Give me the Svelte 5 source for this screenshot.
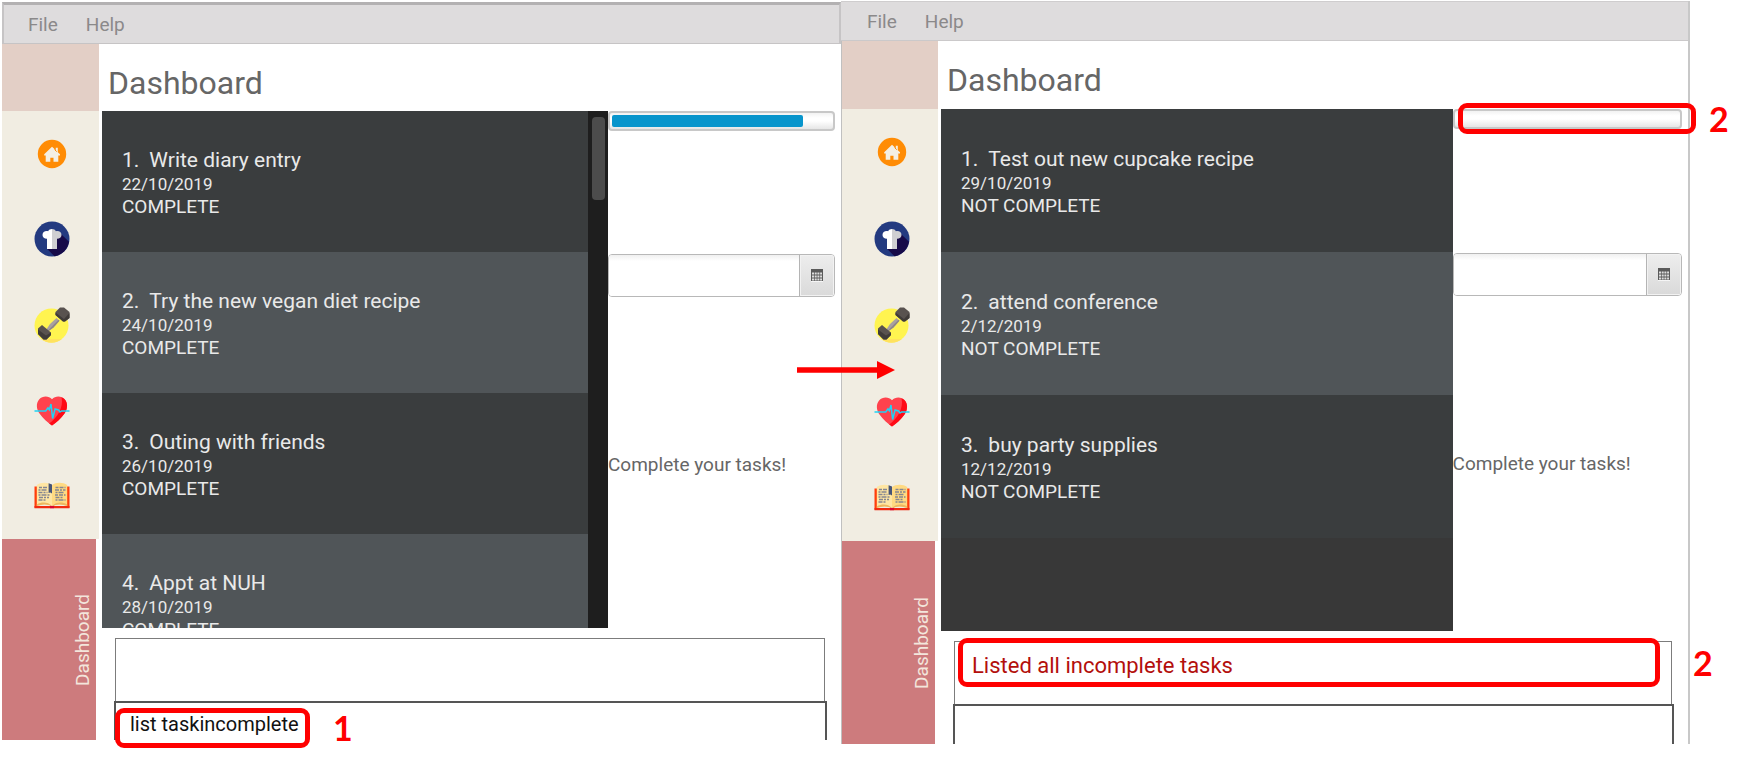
<script>
  const sections = ['home', 'recipes', 'workouts', 'health', 'diary'];

  const before = {
    name: 'before',
    progress: 87,
    message: '',
    command: 'list taskincomplete',
    scrollable: true,
    tasks: [
      { title: 'Write diary entry', date: '22/10/2019', status: 'COMPLETE' },
      { title: 'Try the new vegan diet recipe', date: '24/10/2019', status: 'COMPLETE' },
      { title: 'Outing with friends', date: '26/10/2019', status: 'COMPLETE' },
      { title: 'Appt at NUH', date: '28/10/2019', status: 'COMPLETE' }
    ]
  };

  const after = {
    name: 'after',
    progress: 0,
    message: 'Listed all incomplete tasks',
    command: '',
    scrollable: false,
    tasks: [
      { title: 'Test out new cupcake recipe', date: '29/10/2019', status: 'NOT COMPLETE' },
      { title: 'attend conference', date: '2/12/2019', status: 'NOT COMPLETE' },
      { title: 'buy party supplies', date: '12/12/2019', status: 'NOT COMPLETE' }
    ]
  };
</script>

{#snippet icon(kind)}
  {#if kind === 'home'}
    <svg width="36" height="36" viewBox="0 0 36 36">
      <circle cx="18" cy="18" r="14.2" fill="#ff8c05" />
      <path d="M18 10.800 10.200 18.300v1.200h1.500v6.200h4.600v-4h3.200v4h4.800v-6.200h1.700v-1.200l-2.200-2.100v-4.400h-2.200v2.300z" fill="#f4efe4" />
      <path d="M21 11.500v2.500l1.800 1.700" fill="none" stroke="#ff8c05" stroke-width="1" />
    </svg>
  {:else if kind === 'recipes'}
    <svg width="36" height="36" viewBox="0 0 36 36">
      <circle cx="18" cy="18" r="17.500" fill="#233a80" />
      <path d="M26.500 12.500 35 20.800A17.500 17.500 0 0 1 20.500 35.300L13 27.800z" fill="#170b49" />
      <path d="M18 8c-1.800 0-3.200.8-3.900 2.200-2.800-.9-5.600.9-5.600 3.700 0 2.400 2 4 4.500 3.900V28h5z" fill="#ffffff" />
      <path d="M18 8c1.800 0 3.200.8 3.900 2.200 2.900-.9 5.600.9 5.600 3.700 0 2.400-2 4-4.500 3.900V28h-5z" fill="#cfcfd2" />
    </svg>
  {:else if kind === 'workouts'}
    <svg width="36" height="36" viewBox="0 0 36 36">
      <circle cx="17.500" cy="18.500" r="17" fill="#fff450" />
      <path d="M7 32a17 17 0 0 0 21 0z" fill="#ffe25e" />
      <path d="M12.500 22.200 16 17l6.500-6 3 2.800-6 6.700-5.500 4z" fill="#a9a1a0" />
      <path d="m14 24.500 5.500-4 6-6.700-1-1-9.500 9.700z" fill="#8f8787" />
      <path d="M26 .5h4L35.500 5v6L31 14.500h-2L21.500 8V5z" fill="#59524f" />
      <path d="M21.500 5.500 30 12l1 2.500h-2L21.500 8zM30 12l5.500-6v5L31 14.500z" fill="#403b39" />
      <path d="M4 21.500 8 18l9 7.500V28l-4.500 4.500h-3L4 27z" fill="#59524f" />
      <path d="m4 22.500 8 6 .5 4h-3L4 27zM12 28.500l5-3V28l-4.500 4.500z" fill="#403b39" />
    </svg>
  {:else if kind === 'health'}
    <svg width="36" height="36" viewBox="0 0 36 36">
      <path d="M18 6.200C14.800 2.500 8.500 2.600 5.300 6.200c-3.800 4.200-2.600 10.300.2 14.300C9 25.500 13.500 29.500 18 32.500c4.500-3 9-7 12.500-12 2.800-4 4-10.100.2-14.300C27.500 2.600 21.200 2.500 18 6.200z" fill="#ff424d" />
      <path d="M27.500 4.200c2.500 10-4.500 21-12.300 26.300L18 32.500c4.500-3 9-7 12.500-12C34.500 15 34 6.500 27.500 4.200z" fill="#ff0a16" />
      <path d="M.5 18h11.200l2.300-3.200 1.300 2 1.700-5.800 1.600 14.500 2.500-9.500 3.400 1 1.500 2 1.500-1H35.500" fill="none" stroke="#20d3f5" stroke-width="1.500" />
    </svg>
  {:else}
    <svg width="36" height="36" viewBox="0 0 36 36">
      <path d="M.5 8.500H3V28h30V8.500h2.500v21.200H.5z" fill="#ff3f0c" />
      <path d="M.5 28h35v2.200H.5z" fill="#f02b10" />
      <path d="M16 27.500h4v2.700h-4z" fill="#d80834" />
      <path d="M2.800 7C7 4 14 4 18 7v21C14 26 7 26 2.800 28z" fill="#ffe6a3" />
      <path d="M33.200 7C29 4 22 4 18 7v21c4-2 11-2 15.200 0z" fill="#ffda82" />
      <path d="M2.800 26.500C8 23.500 14 24 18 28c-5-2-10-2-15.200 0zM33.200 26.500C28 23.500 22 24 18 28c5-2 10-2 15.200 0z" fill="#edb75f" />
      <path d="M14.600 5.200l3.400 1.300v9l-1.700-1-1.700.5z" fill="#465477" />
      <g stroke="#858691" stroke-width="1.300" fill="none">
        <path d="M5 9.500h8" stroke-dasharray="3 1 4 1" />
        <path d="M4.500 12h9M4.500 17h11" stroke-dasharray="2 1 5 1" />
        <path d="M4.500 14.500h9M5 19.500h10M4.500 22h8" stroke-dasharray="4 1 2 1" />
        <path d="M21.500 9.500h10M21 17h10.500" stroke-dasharray="3 1 4 1" />
        <path d="M21 12h10.500M21.500 19.500h8" stroke-dasharray="4 1 2 1" />
        <path d="M21.500 14.500h9M21.500 22h10" stroke-dasharray="2 1 5 1" />
      </g>
    </svg>
  {/if}
{/snippet}

{#snippet appWindow(w)}
  <section class="window {w.name}">
    <nav class="menu">
      <button>File</button>
      <button>Help</button>
    </nav>
    <div class="body">
      <aside class="sidebar">
        <div class="corner"></div>
        <div class="tabs">
          {#each sections as s}
            <button aria-label={s}>{@render icon(s)}</button>
          {/each}
        </div>
        <div class="current"><span>Dashboard</span></div>
      </aside>
      <main>
        <h1>Dashboard</h1>
        <div class="content">
          <div class="list">
            <ol>
              {#each w.tasks as t, i}
                <li>
                  <div class="title"><span>{i + 1}.</span><span>{t.title}</span></div>
                  <div class="date">{t.date}</div>
                  <div class="status">{t.status}</div>
                </li>
              {/each}
            </ol>
            {#if w.scrollable}
              <div class="track"><div class="thumb"></div></div>
            {/if}
          </div>
          <div class="side">
            <div class="meter">
              <progress aria-label="Tasks completed" max="100" value={w.progress}></progress>
              {#if w.name === 'after'}
                <div class="mark mark-meter"><b>2</b></div>
              {/if}
            </div>
            <div class="picker">
              <input type="text" aria-label="Date" />
              <button aria-label="Open calendar">
                <svg width="12" height="13" viewBox="0 0 12 13">
                  <path d="M0 0h12v12H0z" fill="#5a5a5a" />
                  <path d="M1 4.500h10M1 7.500h10M1 10.500h10" stroke="#dedede" stroke-width="2" stroke-dasharray="2 .7" />
                  <path d="M0 12.500h12" stroke="#f5f5f5" />
                </svg>
              </button>
            </div>
            <p>Complete your tasks!</p>
          </div>
        </div>
        <div class="result" role="status">
          {w.message}
          {#if w.name === 'after'}
            <div class="mark mark-result"><b>2</b></div>
          {/if}
        </div>
        <div class="command">
          <input type="text" aria-label="Command" value={w.command} />
          {#if w.name === 'before'}
            <div class="mark mark-command"><b>1</b></div>
          {/if}
        </div>
      </main>
    </div>
    {#if w.name === 'after'}
      <svg class="arrow" width="98" height="20" viewBox="0 0 98 20">
        <path d="M0 7.200h80V1l18 9-18 9v-6.200H0z" fill="#ff0000" />
      </svg>
    {/if}
  </section>
{/snippet}

<div class="page">
  {@render appWindow(before)}
  {@render appWindow(after)}
</div>

<style>
  :global(body) {
    margin: 0;
    background: #fff;
  }

  .page {
    display: grid;
    grid-template-columns: 839fr 849fr 66fr;
    align-items: start;
    padding: 1px 0 24px 2px;
    font-family: Roboto, 'Liberation Sans', sans-serif;
  }

  .page * {
    box-sizing: border-box;
  }

  button {
    margin: 0;
    padding: 0;
    border: 0;
    background: none;
    font: inherit;
    color: inherit;
  }

  .window {
    position: relative;
  }

  .before {
    --head: 67px;
    --row: 141px;
    --row-top: 37px;
    --list: 517px;
    --side-gap: 123px;
    --command: 39px;
    --sidebar: 97px;
    margin-top: 1px;
  }

  .after {
    --head: 68px;
    --row: 143px;
    --row-top: 38px;
    --list: 522px;
    --side-gap: 124px;
    --command: 40px;
    --sidebar: 96px;
    border-right: 2px solid #c8c8c8;
  }

  .menu {
    display: flex;
    align-items: center;
    gap: 28px;
    height: 40px;
    padding-left: 26px;
    border-top: 1px solid #cfcdce;
    border-bottom: 1px solid #cbc9ca;
    background: #dedcdd;
    color: #8b898a;
    font-size: 19px;
  }

  .before .menu {
    height: 42px;
    padding-left: 24px;
    border: 2px solid #c6c4c5;
    border-top: 3px solid #b3b1b2;
    border-bottom-width: 1px;
  }

  .body {
    display: grid;
    grid-template-columns: var(--sidebar) 1fr;
  }

  .after .body {
    border-left: 1px solid #c0c0c0;
  }

  .sidebar {
    display: grid;
    grid-template-rows: var(--head) 32fr 15fr;
  }

  .corner {
    background: #e3cfc6;
  }

  .tabs {
    display: flex;
    flex-direction: column;
    background: #f1ede2;
  }

  .tabs button {
    flex: 1;
    display: flex;
    align-items: center;
    justify-content: center;
    padding-left: 3px;
  }

  .current {
    display: flex;
    align-items: center;
    justify-content: flex-end;
    margin-right: 3px;
    padding-right: 2px;
    background: #cd7b7d;
    color: #f3e6dc;
    font-size: 19px;
    line-height: 22px;
  }

  .current span {
    writing-mode: vertical-rl;
    transform: rotate(180deg);
  }

  main {
    display: flex;
    flex-direction: column;
    padding-left: 3px;
  }

  h1 {
    height: var(--head);
    margin: 0;
    padding: 19px 0 0 6px;
    color: #666;
    font-size: 32px;
    font-weight: 400;
    line-height: 40px;
  }

  .content {
    display: grid;
    grid-template-columns: 506fr 227fr;
    height: var(--list);
    padding-right: 6px;
  }

  .list {
    display: flex;
    min-height: 0;
    overflow: hidden;
    background: #383838;
    color: #e9e9e9;
  }

  ol {
    flex: 1;
    margin: 0;
    padding: 0;
    list-style: none;
  }

  li {
    height: var(--row);
    padding: var(--row-top) 0 0 20px;
    background: #3a3d3e;
  }

  li:nth-child(even) {
    background: #505558;
  }

  .title {
    display: flex;
    gap: 10px;
    font-size: 21px;
    line-height: 24px;
  }

  .date {
    font-size: 17px;
    line-height: 24px;
  }

  .status {
    font-size: 19px;
    line-height: 22px;
  }

  .track {
    width: 20px;
    padding: 6px 3px 0 4px;
    background: #1e1e1e;
  }

  .thumb {
    height: 83px;
    border-radius: 4px;
    background: #4c4c4c;
  }

  .meter {
    position: relative;
    height: 20px;
  }

  progress {
    display: block;
    width: 100%;
    height: 20px;
    padding: 2px;
    border: 2px solid #c8c8c8;
    border-radius: 4px;
    background: linear-gradient(#f2f2f2, #fff 30%, #fff 50%, #e6e6e6);
    appearance: none;
  }

  progress::-webkit-progress-bar {
    background: transparent;
  }

  progress::-webkit-progress-value {
    border-radius: 2px;
    background: #0895cc;
  }

  .picker {
    display: flex;
    height: 43px;
    margin-top: var(--side-gap);
    border: 1px solid #b8b8b8;
    border-radius: 4px;
    overflow: hidden;
  }

  .picker input {
    flex: 1;
    min-width: 0;
    border: 0;
    background: linear-gradient(#f0f0f0, #fff 15%);
  }

  .picker button {
    display: flex;
    align-items: center;
    justify-content: center;
    width: 34px;
    border: 1px solid #f2f2f2;
    box-shadow: -1px 0 0 #b4b4b4;
    background: linear-gradient(#ededed, #dadada);
  }

  .side p {
    margin: 156px 0 0;
    color: #666;
    font-size: 19px;
    line-height: 24px;
    white-space: nowrap;
  }

  .result {
    position: relative;
    height: 63px;
    margin: 10px 16px 0 13px;
    padding: 11px 0 0 17px;
    border: 1px solid #7c7c7c;
    border-bottom: 0;
    color: #b30f0c;
    font-size: 22px;
    line-height: 26px;
  }

  .command {
    position: relative;
    height: var(--command);
    margin: 0 14px 0 12px;
  }

  .command input {
    width: 100%;
    height: 100%;
    padding: 4px 0 0 14px;
    border: 2px solid #555;
    border-width: 2px 2px 0;
    background: transparent;
    color: #111;
    font: inherit;
    font-size: 20px;
    outline: 0;
  }

  .mark {
    position: absolute;
    border: 5px solid #f00;
    border-radius: 9px;
    pointer-events: none;
  }

  .mark b {
    position: absolute;
    left: calc(100% + 18px);
    top: 50%;
    margin-top: -20px;
    color: #f00;
    font: 700 34px/40px Lato, sans-serif;
  }

  .mark-meter {
    inset: -6px -14px -5px 5px;
  }

  .mark-result {
    inset: -4px 11px 17px 3px;
  }

  .mark-result b {
    left: calc(100% + 38px);
  }

  .mark-command {
    left: 1px;
    top: 7px;
    width: 195px;
    height: 40px;
  }

  .mark-command b {
    left: calc(100% + 28px);
  }

  .arrow {
    position: absolute;
    left: -44px;
    top: 359px;
  }
</style>
